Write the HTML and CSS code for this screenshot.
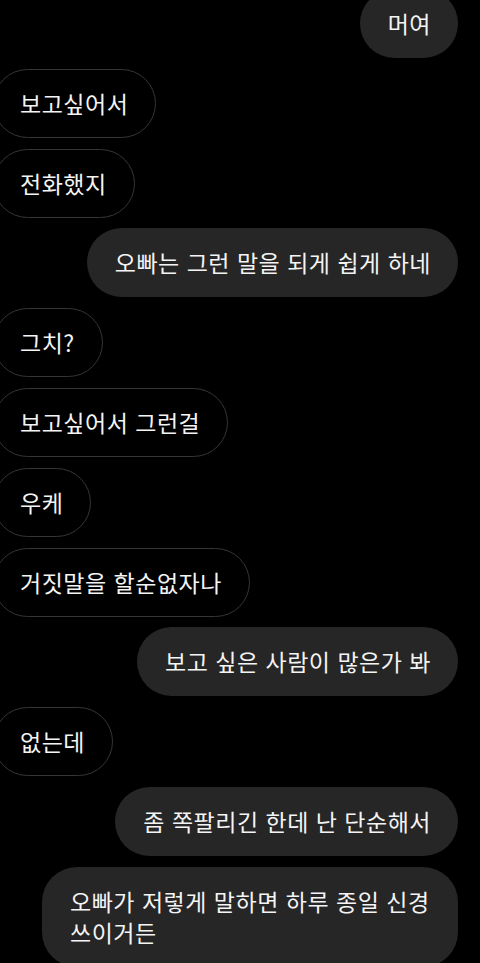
FILE: index.html
```html
<!DOCTYPE html>
<html lang="ko">
<head>
<meta charset="UTF-8" />
<meta name="viewport" content="width=device-width, initial-scale=1" />
<title>대화</title>
<link rel="stylesheet" href="styles.css">
</head>
<body>

<main class="thread">
  <div class="msg mine first">머여</div>
  <div class="msg theirs">보고싶어서</div>
  <div class="msg theirs">전화했지</div>
  <div class="msg mine">오빠는 그런 말을 되게 쉽게 하네</div>
  <div class="msg theirs">그치?</div>
  <div class="msg theirs">보고싶어서 그런걸</div>
  <div class="msg theirs">우케</div>
  <div class="msg theirs">거짓말을 할순없자나</div>
  <div class="msg mine">보고 싶은 사람이 많은가 봐</div>
  <div class="msg theirs">없는데</div>
  <div class="msg mine">좀 쪽팔리긴 한데 난 단순해서</div>
  <div class="msg mine">오빠가 저렇게 말하면 하루 종일 신경 쓰이거든</div>
</main>

</body>
</html>
```

FILE: styles.css
```css
* {
  box-sizing: border-box;
}
html, body {
  height: 100%;
}
body {
  margin: 0;
  background: #000;
  color: #f4f4f4;
  font-family: "Noto Sans CJK KR", "Noto Sans", sans-serif;
  overflow: hidden;
}
.thread {
  display: flex;
  flex-direction: column;
  gap: 10.8px;
  padding: 0 22px 0 0;
}
.msg {
  max-width: 416px;
  min-height: 69px;
  padding: 19px 27px 19px 26px;
  font-size: 23px;
  line-height: 31px;
  letter-spacing: 0.5px;
  word-break: keep-all;
  border-radius: 35px;
}
.msg.first {
  margin-top: -11px;
}
.mine {
  align-self: flex-end;
  background: #262626;
  padding-left: 28px;
}
.theirs {
  align-self: flex-start;
  margin-left: -7px;
  border: 1px solid #363636;
  padding: 18px 27px 18px 26px;
}
```
